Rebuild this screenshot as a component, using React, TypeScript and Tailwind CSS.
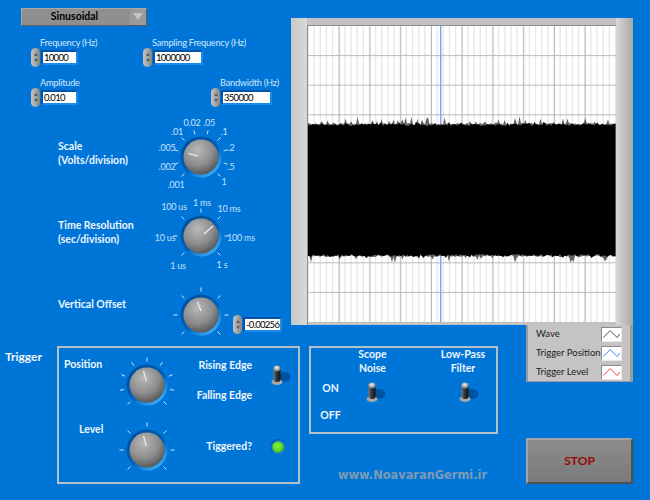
import { useId, type ReactNode } from 'react'

interface NumericProps {
  label: string
  value: string
  inputWidth: string
  className?: string
}

function NumericInput({ value, inputWidth }: { value: string; inputWidth: string }) {
  return (
    <div className="flex items-center">
      <div className="flex h-[19px] w-[9px] flex-col items-center justify-center gap-[3px] rounded-full bg-gradient-to-r from-[#c4c4c4] to-[#868686]">
        <span className="h-0 w-0 border-x-[2px] border-b-[3px] border-x-transparent border-b-[#5c5c5c]" />
        <span className="h-0 w-0 border-x-[2px] border-t-[3px] border-x-transparent border-t-[#5c5c5c]" />
      </div>
      <div className={`ml-px flex h-[15px] items-center overflow-hidden border-2 border-t-[#0053a6] border-l-[#0053a6] border-r-[#1a8bec] border-b-[#1a8bec] bg-white ${inputWidth}`}>
        <span className="pl-px text-[9.5px] leading-none tracking-[-0.7px] whitespace-nowrap text-black">{value}</span>
      </div>
    </div>
  )
}

function NumericControl({ label, value, inputWidth, className = '' }: NumericProps) {
  return (
    <div className={className}>
      <div className="h-[14px] pl-[9px] text-[9.25px] leading-[17px] tracking-[-0.25px] whitespace-nowrap text-[#d3e8fb]">{label}</div>
      <NumericInput value={value} inputWidth={inputWidth} />
    </div>
  )
}

interface KnobProps {
  ticks: number[]
  pointer: [number, number, number, number]
  labels?: [string, number, number][]
}

// coordinates in the viewBox are pixels, the knob centre is 32,32
function Knob({ ticks, pointer, labels = [] }: KnobProps) {
  const id = useId()
  return (
    <svg viewBox="0 0 64 64" className="h-16 w-16 shrink-0 overflow-visible">
      <defs>
        <linearGradient id={`${id}r`} x1="0.2" y1="0.1" x2="0.8" y2="0.9">
          <stop offset="0" stopColor="#00509f" />
          <stop offset="0.55" stopColor="#0060b8" />
          <stop offset="1" stopColor="#39aaf5" />
        </linearGradient>
        <radialGradient id={`${id}m`} cx="0.4" cy="0.3" r="0.8">
          <stop offset="0" stopColor="#b8b8b8" />
          <stop offset="0.55" stopColor="#8c8c8c" />
          <stop offset="1" stopColor="#484848" />
        </radialGradient>
      </defs>
      {ticks.map(a => {
        const t = (a * Math.PI) / 180
        return (
          <line
            key={a}
            x1={32 + 23.5 * Math.sin(t)}
            y1={32 - 23.5 * Math.cos(t)}
            x2={32 + 27.5 * Math.sin(t)}
            y2={32 - 27.5 * Math.cos(t)}
            stroke="#d0e6fa"
            strokeWidth="1"
          />
        )
      })}
      <circle cx="32" cy="32" r="20.5" fill={`url(#${id}r)`} />
      <circle cx="32" cy="32" r="17.5" fill={`url(#${id}m)`} />
      <line
        x1={32 + pointer[0]}
        y1={32 + pointer[1]}
        x2={32 + pointer[2]}
        y2={32 + pointer[3]}
        stroke="#f2f2f2"
        strokeWidth="1.1"
      />
      {labels.map(([text, x, y]) => (
        <text key={text} x={x} y={y + 3} textAnchor="middle" fontSize="9" letterSpacing="-0.2" fill="#c6e0f8">
          {text}
        </text>
      ))}
    </svg>
  )
}

function Toggle({ className = '' }: { className?: string }) {
  const id = useId()
  return (
    <svg viewBox="0 0 24 24" className={`h-6 w-6 shrink-0 ${className}`}>
      <defs>
        <linearGradient id={`${id}b`} x1="0" y1="0" x2="1" y2="0">
          <stop offset="0" stopColor="#777" />
          <stop offset="0.4" stopColor="#3a3a3a" />
          <stop offset="1" stopColor="#111" />
        </linearGradient>
        <radialGradient id={`${id}t`} cx="0.45" cy="0.35" r="0.6">
          <stop offset="0" stopColor="#f4f4f4" />
          <stop offset="1" stopColor="#777" />
        </radialGradient>
      </defs>
      <ellipse cx="17" cy="14" rx="6.5" ry="5" fill="#00529f" />
      <ellipse cx="10" cy="19" rx="5.5" ry="3" fill="#a8a8a8" />
      <rect x="6.5" y="4" width="7" height="15" rx="3" fill={`url(#${id}b)`} />
      <ellipse cx="10" cy="5.5" rx="3.6" ry="3" fill={`url(#${id}t)`} />
    </svg>
  )
}

function Swatch({ color }: { color: string }) {
  return (
    <svg viewBox="0 0 21 15" className="h-[15px] w-[21px] border border-t-[#8a8a8a] border-l-[#8a8a8a] border-r-[#e8e8e8] border-b-[#e8e8e8] bg-white">
      <polyline points="1,11 9,3 17,11 20,7" fill="none" stroke={color} strokeWidth="1.1" />
    </svg>
  )
}

function buildEdge(base: number, dir: number, spread: number, peak: number) {
  let seed = base * 7 + 3
  const rnd = () => {
    seed = (seed * 1103515245 + 12345) & 0x7fffffff
    return seed / 0x7fffffff
  }
  const pts: string[] = []
  for (let x = 0; x <= 308; x += 1.5) {
    pts.push(`${x},${base + dir * (rnd() * spread + (rnd() > 0.8 ? rnd() * peak : 0))}`)
  }
  return pts
}

const wave = [...buildEdge(100, -1, 2.5, 2), ...buildEdge(228, 1, 2.5, 2).reverse()].join(' ')
const spikes = [...buildEdge(99, -1, 2, 7), ...buildEdge(229, 1, 2, 7).reverse()].join(' ')

function Plot() {
  const minor: number[] = []
  for (let x = 0; x < 308; x += 6.15) minor.push(x)
  const majorX = [1, 2, 3, 4, 5, 6, 7, 8, 9].map(i => i * 30.75 + 0.5)
  const majorY = [1, 2, 3, 4, 5, 6, 7, 8, 9].map(i => i * 29.6)
  return (
    <svg viewBox="0 0 308 296" className="h-[296px] w-[308px] bg-white">
      {minor.map(x => (
        <line key={x} x1={x} y1="0" x2={x} y2="296" stroke="#e8e8e8" strokeWidth="1.4" />
      ))}
      {majorX.map(x => (
        <line key={x} x1={x} y1="0" x2={x} y2="296" stroke="#b4b4b4" strokeWidth="0.9" />
      ))}
      {majorY.map(y => (
        <line key={y} x1="0" y1={y} x2="308" y2={y} stroke="#b4b4b4" strokeWidth="0.9" />
      ))}
      <line x1="132.7" y1="0" x2="132.7" y2="296" stroke="#7fa5f0" strokeWidth="1.5" />
      <polygon points={spikes} fill="#606060" />
      <polygon points={wave} fill="#000" />
    </svg>
  )
}

function Title({ className = '', children }: { className?: string; children: ReactNode }) {
  return (
    <div className={`text-[10.5px] leading-[14px] font-bold whitespace-nowrap text-[#eef6fe] ${className}`}>
      {children}
    </div>
  )
}

const seven = [-135, -90, -45, 0, 45, 90, 135]
const nine = [-135, -101, -68, -34, 0, 34, 68, 101, 135]
const ten = [-135, -105, -75, -45, -15, 15, 45, 75, 105, 135]

const scaleLabels: [string, number, number][] = [
  ['0.02', 23, -2], ['.05', 40, -2], ['.01', 8, 7], ['.1', 55, 7], ['.005', -2, 23],
  ['.2', 62, 23], ['.002', -2, 42], ['.5', 62, 42], ['.001', 7, 60], ['1', 55, 57],
]
const timeLabels: [string, number, number][] = [
  ['1 ms', 33, -1], ['100 us', 5, 3], ['10 ms', 60, 5], ['10 us', -4, 34],
  ['100 ms', 72, 34], ['1 us', 9, 62], ['1 s', 53, 61],
]

export default function App() {
  return (
    <div className="flex h-[500px] w-[650px] flex-col overflow-hidden bg-[#0075d8] font-['Lato','Noto_Sans',sans-serif]">
      <div className="flex h-[325px]">
        {/* left controls */}
        <div className="flex w-[291px] flex-col">
          <div className="mt-[8px] ml-[21px] flex h-[19px] w-[126px] items-center border border-t-[#a8a8a8] border-l-[#a8a8a8] border-r-[#5c5c5c] border-b-[#5c5c5c] bg-[#8f8f8f]">
            <span className="flex-1 pr-[3px] text-center text-[10.5px] font-bold text-black">Sinusoidal</span>
            <span className="flex h-full w-[16px] items-center justify-center bg-[#9a9a9a]">
              <span className="h-0 w-0 border-x-[5px] border-t-[7px] border-x-transparent border-t-[#c4c4c4]" />
            </span>
          </div>

          <div className="mt-[8px] ml-[31px] grid grid-cols-[112px_68px_auto] gap-y-[7px]">
            <NumericControl label="Frequency (Hz)" value="10000" inputWidth="w-[37px]" />
            <NumericControl label="Sampling Frequency (Hz)" value="1000000" inputWidth="w-[50px]" className="col-span-2" />
            <NumericControl label="Amplitude" value="0.010" inputWidth="w-[37px]" />
            <NumericControl label="Bandwidth (Hz)" value="350000" inputWidth="w-[51px]" className="col-start-3" />
          </div>

          <div className="mt-[18px] ml-[58px] flex flex-col gap-[15px]">
            <div className="flex h-16 items-start">
              <Title className="w-[111px] pt-[14px]">Scale<br />(Volts/division)</Title>
              <Knob ticks={ten} pointer={[-13, -3.5, -3, -1]} labels={scaleLabels} />
            </div>
            <div className="flex h-16 items-start">
              <Title className="w-[111px] pt-[14px]">Time Resolution<br />(sec/division)</Title>
              <Knob ticks={seven} pointer={[3, -2, 12, -10]} labels={timeLabels} />
            </div>
            <div className="flex h-16 items-start">
              <Title className="w-[111px] pt-[14px]">Vertical Offset</Title>
              <Knob ticks={seven} pointer={[-3.5, -13.5, 0, -4]} />
              <div className="pt-[32px]">
                <NumericInput value="-0.00256" inputWidth="w-[39px]" />
              </div>
            </div>
          </div>
        </div>

        {/* graph */}
        <div className="mt-[18px] flex h-[307px] w-[342px] bg-[#c2c2c2]">
          <div className="w-[16px] bg-gradient-to-r from-[#c8c8c8] to-[#d8d8d8]" />
          <div className="mt-[7px] border-t border-l border-[#8c8c8c]">
            <Plot />
          </div>
          <div className="flex-1 bg-gradient-to-r from-[#d8d8d8] to-[#a8a8a8]" />
        </div>
      </div>

      <div className="flex items-start">
        {/* trigger group */}
        <Title className="mt-[25px] w-[57px] pl-[5px] text-[12px]">Trigger</Title>
        <div className="mt-[21px] flex h-[138px] w-[243px] flex-col border-2 border-[#b4c0cc] pt-[5px]">
          <div className="flex h-16 items-start pl-[5px]">
            <Title className="w-[51px] pt-[4px]">Position</Title>
            <Knob ticks={nine} pointer={[-3.5, -14, -0.7, -4]} />
            <div className="flex w-[73px] flex-col gap-[16px] pt-[5px] text-right">
              <Title>Rising Edge</Title>
              <Title>Falling Edge</Title>
            </div>
            <Toggle className="mt-[10px] ml-[15px]" />
          </div>
          <div className="mt-px flex h-16 items-start pl-[20px]">
            <Title className="w-[36px] pt-[4px]">Level</Title>
            <Knob ticks={seven} pointer={[-3.5, -14, -0.7, -4]} />
            <Title className="w-[73px] pt-[21px] text-right">Tiggered?</Title>
            <svg viewBox="0 0 18 18" className="mt-[20px] ml-[17px] h-[18px] w-[18px]">
              <defs>
                <radialGradient id="led" cx="0.45" cy="0.4" r="0.6">
                  <stop offset="0" stopColor="#8cf53a" />
                  <stop offset="1" stopColor="#48cc10" />
                </radialGradient>
              </defs>
              <circle cx="9" cy="9" r="8" fill="#0059ac" />
              <circle cx="9.5" cy="9.5" r="7.5" fill="#2f9bec" fillOpacity="0.5" />
              <circle cx="9" cy="9" r="5.6" fill="url(#led)" />
            </svg>
          </div>
        </div>

        {/* switches group and watermark */}
        <div className="mt-[21px] ml-[9px] w-[189px]">
          <div className="flex h-[88px] border-2 border-[#b4c0cc]">
            <div className="flex w-[34px] flex-col items-center gap-[13px] pt-[33px] pl-[5px]">
              <Title>ON</Title>
              <Title>OFF</Title>
            </div>
            <div className="-mt-px w-[55px]">
              <Title className="text-center">Scope<br />Noise</Title>
              <Toggle className="mt-[5px] ml-[17px]" />
            </div>
            <div className="-mt-px ml-[33px] w-[60px]">
              <Title className="text-center">Low-Pass<br />Filter</Title>
              <Toggle className="mt-[5px] ml-[22px]" />
            </div>
          </div>
          <div className="mt-[34px] pl-[29px] font-['DejaVu_Sans',sans-serif] text-[11.4px] leading-[15px] font-bold whitespace-nowrap text-[#7f9ab5]">
            www.NoavaranGermi.ir
          </div>
        </div>

        {/* legend and stop */}
        <div className="ml-[28px] w-[107px]">
          <div className="flex h-[57px] flex-col justify-center gap-[4px] border-r-[3px] border-b border-l-[2px] border-r-[#9a9a9a] border-b-[#9a9a9a] border-l-[#9a9a9a] bg-[#c4c4c4] px-[8px]">
            {[
              ['Wave', '#444444'],
              ['Trigger Position', '#3f74ee'],
              ['Trigger Level', '#f0403f'],
            ].map(([name, color]) => (
              <div key={name} className="flex h-[15px] items-center justify-between">
                <span className="text-[9.5px] leading-none whitespace-nowrap text-[#1c1c1c]">{name}</span>
                <Swatch color={color} />
              </div>
            ))}
          </div>
          <button className="mt-[56px] flex h-[46px] w-[107px] items-center justify-center border-2 border-t-[#a2a2a2] border-l-[#a2a2a2] border-r-[#4f4f4f] border-b-[#4f4f4f] bg-gradient-to-b from-[#8c8c8c] to-[#7a7a7a] text-[12px] font-bold text-[#980808]">
            STOP
          </button>
        </div>
      </div>
    </div>
  )
}
